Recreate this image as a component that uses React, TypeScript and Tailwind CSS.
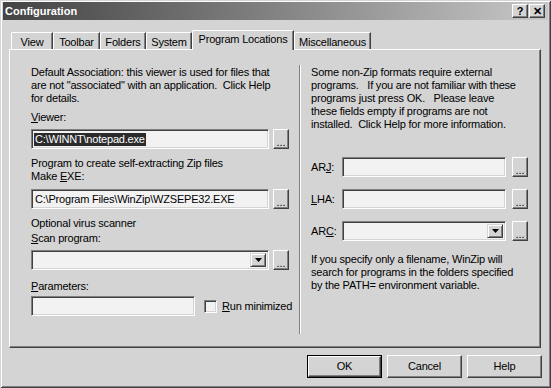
import * as React from "react"

const font = { fontFamily: '"Liberation Sans", Arial, sans-serif' }

const Sunken: React.FC<{ className?: string; children?: React.ReactNode }> = ({ className = "", children }) => (
  <div
    className={`border border-t-[#808080] border-l-[#808080] border-b-white border-r-white shadow-[inset_1px_1px_0_#404040,inset_-1px_-1px_0_#d4d4d4] bg-[#f2f2f2] h-[20px] flex items-center whitespace-nowrap ${className}`}
  >
    {children}
  </div>
)

const Raised: React.FC<{ className?: string; children?: React.ReactNode }> = ({ className = "", children }) => (
  <div
    className={`border border-t-white border-l-white border-r-[#404040] border-b-[#404040] shadow-[inset_-1px_-1px_0_#808080] bg-[#d4d4d4] flex items-center justify-center ${className}`}
  >
    {children}
  </div>
)

const Browse = () => (
  <Raised className="w-[16px] h-[20px] text-[11px] leading-none pt-[6px] tracking-normal">...</Raised>
)

const Arrow = () => (
  <div className="absolute right-[2px] top-[2px] bottom-[2px] w-[16px] border border-t-[#d4d4d4] border-l-[#d4d4d4] border-r-[#404040] border-b-[#404040] shadow-[inset_1px_1px_0_#ffffff,inset_-1px_-1px_0_#808080] bg-[#d4d4d4] flex items-center justify-center">
    <svg width="7" height="4" viewBox="0 0 7 4">
      <path d="M0 0h7L3.5 4z" fill="#000" />
    </svg>
  </div>
)

const tabs = [
  { label: "View", w: "w-[42px]" },
  { label: "Toolbar", w: "w-[47px]" },
  { label: "Folders", w: "w-[46px]" },
  { label: "System", w: "w-[46px]" },
  { label: "Program Locations", w: "w-[102px]", active: true },
  { label: "Miscellaneous", w: "w-[77px]" },
]

export default function App() {
  return (
    <div
      style={font}
      className="w-[551px] h-[388px] bg-[#d4d4d4] flex flex-col text-black text-[11px] leading-[13px] tracking-[-0.2px] shadow-[inset_1px_1px_0_#d4d4d4,inset_-1px_-1px_0_#404040,inset_2px_2px_0_#ffffff,inset_-2px_-2px_0_#808080]"
    >
      {/* Title bar */}
      <div className="mt-[2px] mx-[3px] h-[18px] bg-gradient-to-r from-[#444444] to-[#c8c8c8] flex items-center justify-between pl-[2px] pr-[3px]">
        <span className="text-white font-bold text-[11px] tracking-normal">Configuration</span>
        <div className="flex gap-[1px]">
          <Raised className="w-[16px] h-[14px] font-bold text-[11px]">?</Raised>
          <Raised className="w-[16px] h-[14px] font-bold text-[11px]">✕</Raised>
        </div>
      </div>

      {/* Tabs */}
      <div className="mt-[10px] ml-[11px] h-[19px] flex items-end">
        {tabs.map((t) =>
          t.active ? (
            <div
              key={t.label}
              className={`${t.w} h-[20px] -mb-px relative z-10 bg-[#d4d4d4] border-t border-l border-r border-t-white border-l-white border-r-[#404040] rounded-tl-[2px] shadow-[inset_-1px_0_0_#808080] flex justify-center pt-[2px] whitespace-nowrap`}
            >
              {t.label}
            </div>
          ) : (
            <div
              key={t.label}
              className={`${t.w} h-[17px] bg-[#d4d4d4] border-t border-l border-r border-t-white border-l-white border-r-[#404040] rounded-tl-[2px] shadow-[inset_-1px_0_0_#808080] flex justify-center pt-[3px] whitespace-nowrap`}
            >
              {t.label}
            </div>
          )
        )}
      </div>

      {/* Panel */}
      <div className="ml-[9px] w-[532px] h-[299px] border border-t-white border-l-white border-r-[#404040] border-b-[#404040] shadow-[inset_-1px_-1px_0_#808080] flex">
        {/* Left column */}
        <div className="ml-[21px] w-[258px] pt-[16px] flex flex-col">
          <p className="whitespace-pre">
            Default Association: this viewer is used for files that{"\n"}are not &quot;associated&quot; with an application.  Click Help{"\n"}for details.
          </p>
          <p className="mt-[6px]">
            <u>V</u>iewer:
          </p>
          <div className="mt-[5px] flex gap-[4px]">
            <Sunken className="w-[239px] pl-[2px]">
              <span className="bg-[#2b2b2b] text-white px-[1px]">C:\WINNT\notepad.exe</span>
            </Sunken>
            <Browse />
          </div>

          <p className="mt-[8px]">Program to create self-extracting Zip files</p>
          <p>
            Make <u>E</u>XE:
          </p>
          <div className="mt-[6px] flex gap-[4px]">
            <Sunken className="w-[239px] pl-[3px]">C:\Program Files\WinZip\WZSEPE32.EXE</Sunken>
            <Browse />
          </div>

          <p className="mt-[8px]">Optional virus scanner</p>
          <p className="mt-[2px]">
            <u>S</u>can program:
          </p>
          <div className="mt-[5px] flex gap-[4px]">
            <Sunken className="w-[239px] relative">
              <Arrow />
            </Sunken>
            <Browse />
          </div>

          <p className="mt-[10px]">
            <u>P</u>arameters:
          </p>
          <div className="mt-[3px] flex items-center whitespace-nowrap">
            <Sunken className="w-[164px] shrink-0" />
            <div className="ml-[9px] w-[13px] h-[13px] shrink-0 border border-t-[#808080] border-l-[#808080] border-b-white border-r-white shadow-[inset_1px_1px_0_#404040,inset_-1px_-1px_0_#d4d4d4] bg-[#f2f2f2]" />
            <span className="ml-[5px]">
              <u>R</u>un minimized
            </span>
          </div>
        </div>

        {/* Divider */}
        <div className="ml-[10px] mt-[15px] w-[2px] h-[269px] border-l border-l-[#808080] border-r border-r-white" />

        {/* Right column */}
        <div className="ml-[10px] w-[217px] pt-[16px] flex flex-col">
          <p className="whitespace-pre">
            Some non-Zip formats require external{"\n"}programs.   If you are not familiar with these{"\n"}programs just press OK.   Please leave{"\n"}these fields empty if programs are not{"\n"}installed.  Click Help for more information.
          </p>
          <div className="mt-[26px] flex items-center">
            <span className="w-[31px]">
              AR<u>J</u>:
            </span>
            <Sunken className="w-[165px]" />
            <div className="ml-[6px]">
              <Browse />
            </div>
          </div>
          <div className="mt-[12px] flex items-center">
            <span className="w-[31px]">
              <u>L</u>HA:
            </span>
            <Sunken className="w-[165px]" />
            <div className="ml-[6px]">
              <Browse />
            </div>
          </div>
          <div className="mt-[12px] flex items-center">
            <span className="w-[31px]">
              AR<u>C</u>:
            </span>
            <Sunken className="w-[165px] relative">
              <Arrow />
            </Sunken>
            <div className="ml-[6px]">
              <Browse />
            </div>
          </div>
          <p className="mt-[12px] whitespace-pre">
            If you specify only a filename, WinZip will{"\n"}search for programs in the folders specified{"\n"}by the PATH= environment variable.
          </p>
        </div>
      </div>

      {/* Buttons */}
      <div className="mt-[7px] pr-[9px] flex justify-end gap-[5px]">
        <div className="border border-black">
          <Raised className="w-[73px] h-[21px]">OK</Raised>
        </div>
        <Raised className="w-[75px] h-[23px]">Cancel</Raised>
        <Raised className="w-[75px] h-[23px]">Help</Raised>
      </div>
    </div>
  )
}
